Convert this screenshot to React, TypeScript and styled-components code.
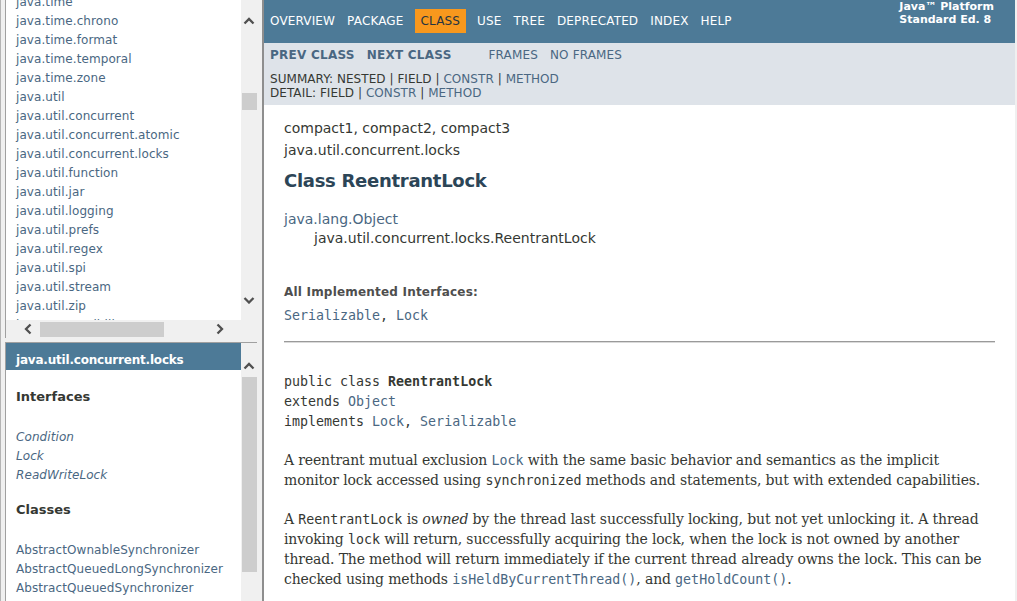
import React from "react";
import styled, { createGlobalStyle } from "styled-components";

const GlobalStyle = createGlobalStyle`
  html, body { margin: 0; padding: 0; }
  body {
    font-family: "DejaVu Sans", Arial, Helvetica, sans-serif;
    color: #353833;
    background: #f0f0f0;
  }
  #root { width: 1017px; height: 601px; }
`;

const LINK = "#4A6782";
const BLUE = "#4D7A97";
const MONO = `"DejaVu Sans Mono", monospace`;

const Screen = styled.div`
  display: flex;
  width: 1017px;
  height: 601px;
  overflow: hidden;
  background: #f0f0f0;
`;

/* ---------- left column (two frames) ---------- */
const LeftCol = styled.div`
  flex: none;
  width: 252px;
  border-left: 1px solid #b4b4b4;
  padding-left: 4px;
  padding-right: 5px;
  display: flex;
  flex-direction: column;
  gap: 4px;
`;

const TopFrame = styled.div`
  flex: none;
  height: 338px;
  display: grid;
  grid-template-columns: 235px 16px;
  grid-template-rows: 320px 18px;
  border-left: 1px solid #a0a0a0;
`;

const BottomFrame = styled.div`
  flex: 1;
  min-height: 0;
  display: grid;
  grid-template-columns: 235px 16px;
  border-left: 1px solid #a0a0a0;
  border-top: 1px solid #a0a0a0;
`;

const Pane = styled.div`
  background: #ffffff;
  overflow: hidden;
  min-height: 0;
`;

const Corner = styled.div`
  background: #f0f0f0;
`;

const IndexList = styled.ul<{ $offset?: number }>`
  list-style: none;
  margin: ${(p) => p.$offset ?? 0}px 0 0 0;
  padding: 0 0 0 10px;
  font-size: 12px;
  letter-spacing: 0.08px;
`;

const IndexItem = styled.li<{ $italic?: boolean }>`
  padding-top: 2px;
  line-height: 17px;
  white-space: nowrap;
  color: ${LINK};
  font-style: ${(p) => (p.$italic ? "italic" : "normal")};
`;

const PackageBar = styled.h1`
  margin: 0;
  background: ${BLUE};
  color: #ffffff;
  font-size: 12px;
  font-weight: bold;
  letter-spacing: -0.2px;
  line-height: 14px;
  padding: 10px 0 3px 10px;
  white-space: nowrap;
`;

const IndexHeading = styled.h2<{ $top: number }>`
  margin: ${(p) => p.$top}px 0 0 10px;
  font-size: 13px;
  line-height: 16px;
  font-weight: bold;
  color: #353833;
`;

/* ---------- fake scrollbars ---------- */
const VScroll = styled.div<{ $padTop: number; $padBottom: number }>`
  background: #f0f0f0;
  display: flex;
  flex-direction: column;
  padding-top: ${(p) => p.$padTop}px;
  padding-bottom: ${(p) => p.$padBottom}px;
  min-height: 0;
`;

const HScroll = styled.div`
  background: #f0f0f0;
  display: flex;
  align-items: flex-start;
  padding: 0 13px;
`;

const VBtn = styled.div`
  flex: none;
  height: 17px;
  display: flex;
  align-items: center;
  justify-content: center;
`;

const HBtn = styled.div`
  flex: none;
  width: 17px;
  height: 18px;
  display: flex;
  align-items: center;
  justify-content: center;
`;

const VThumb = styled.div<{ $top: number; $size: number }>`
  flex: none;
  margin-top: ${(p) => p.$top}px;
  margin-left: 1px;
  height: ${(p) => p.$size}px;
  background: #cdcdcd;
`;

const HThumb = styled.div<{ $left: number; $size: number }>`
  flex: none;
  margin-top: 2px;
  margin-left: ${(p) => p.$left}px;
  width: ${(p) => p.$size}px;
  height: 15px;
  background: #cdcdcd;
`;

const Spacer = styled.div`
  flex: 1;
`;

type Dir = "up" | "down" | "left" | "right";

const Chevron: React.FC<{ dir: Dir }> = ({ dir }) => {
  const vertical = dir === "up" || dir === "down";
  const paths: Record<Dir, string> = {
    up: "M1.5 6.5 L6 2 L10.5 6.5",
    down: "M1.5 2 L6 6.5 L10.5 2",
    left: "M6.5 1.5 L2 6 L6.5 10.5",
    right: "M1.5 1.5 L6 6 L1.5 10.5",
  };
  return (
    <svg
      width={vertical ? 12 : 8}
      height={vertical ? 8 : 12}
      viewBox={vertical ? "0 0 12 8" : "0 0 8 12"}
    >
      <path d={paths[dir]} fill="none" stroke="#505050" strokeWidth={2.3} />
    </svg>
  );
};

/* ---------- right frame ---------- */
const RightFrame = styled.div`
  flex: none;
  width: 751px;
  height: 601px;
  border-left: 2px solid #8e8e8e;
  background: #ffffff;
  overflow: hidden;
  display: flex;
  flex-direction: column;
`;

const TopNav = styled.div`
  flex: none;
  height: 43px;
  background: ${BLUE};
  color: #ffffff;
  font-size: 12px;
  display: flex;
  justify-content: space-between;
  align-items: flex-start;
`;

const NavList = styled.ul<{ $top?: number; $gapRight?: number }>`
  list-style: none;
  display: flex;
  margin: ${(p) => p.$top ?? 0}px ${(p) => p.$gapRight ?? 0}px 0 0;
  padding: 0;
`;

const NavItem = styled.li<{ $active?: boolean; $bold?: boolean }>`
  padding: 5px 6px;
  line-height: 14px;
  text-transform: uppercase;
  white-space: nowrap;
  letter-spacing: ${(p) => (p.$bold ? "0.25px" : "0.15px")};
  margin: ${(p) => (p.$active ? "0 5px" : "0")};
  background: ${(p) => (p.$active ? "#F8981D" : "transparent")};
  color: ${(p) => (p.$active ? "#253441" : "inherit")};
  font-weight: ${(p) => (p.$bold ? "bold" : "normal")};
`;

const About = styled.div`
  padding: 0 21px;
  font-size: 11px;
  line-height: 13px;
  font-weight: bold;
  white-space: nowrap;
`;

const SubNav = styled.div`
  flex: none;
  background: #dee3e9;
  font-size: 12px;
  padding-bottom: 5px;
  display: flex;
  flex-direction: column;
`;

const SubRow = styled.div`
  display: flex;
  color: ${LINK};
  margin-bottom: 5px;
`;

const SubLine = styled.div`
  padding-left: 6px;
  line-height: 14px;
  text-transform: uppercase;
  letter-spacing: 0.05px;
  color: #353833;
  white-space: nowrap;
`;

const SubLink = styled.span`
  color: ${LINK};
`;

const Content = styled.div`
  padding: 0 20px;
`;

const SubTitle = styled.div<{ $top: number }>`
  margin-top: ${(p) => p.$top}px;
  font-size: 14px;
  line-height: 17px;
`;

const Title = styled.h2`
  margin: 11px 0 0 0;
  font-size: 18px;
  line-height: 21px;
  font-weight: bold;
  letter-spacing: -0.28px;
  color: #2c4557;
`;

const Inheritance = styled.ul<{ $nested?: boolean }>`
  list-style: none;
  margin: ${(p) => (p.$nested ? "0" : "19px 0 0 0")};
  padding: 0 0 0 ${(p) => (p.$nested ? 30 : 0)}px;
  font-size: 14px;
  line-height: 19px;
`;

const Link = styled.span`
  color: ${LINK};
`;

const DefList = styled.dl`
  margin: 37px 0 0 0;
`;

const DefTerm = styled.dt`
  font-size: 12px;
  line-height: 15px;
  font-weight: bold;
  letter-spacing: 0.2px;
  color: #4e4e4e;
`;

const DefData = styled.dd`
  margin: 7px 0 0 0;
  font-family: ${MONO};
  font-size: 13.3px;
  line-height: 17px;
`;

const Rule = styled.hr`
  margin: 17px 0 0 0;
  height: 0;
  border: none;
  border-top: 1px solid #9a9a9a;
  border-bottom: 1px solid #dadada;
`;

const Signature = styled.pre`
  margin: 29px 0 0 0;
  font-family: ${MONO};
  font-size: 13.3px;
  line-height: 20px;
  color: #353833;
`;

const Strong = styled.span`
  font-weight: bold;
`;

const Block = styled.p<{ $top: number }>`
  margin: ${(p) => p.$top}px 0 0 0;
  font-family: "DejaVu Serif", Georgia, "Times New Roman", serif;
  font-size: 14px;
  letter-spacing: -0.15px;
  line-height: 20px;
  color: #353833;
`;

const Code = styled.code<{ $link?: boolean }>`
  font-family: ${MONO};
  font-size: 13.3px;
  line-height: 14px;
  letter-spacing: 0;
  color: ${(p) => (p.$link ? LINK : "inherit")};
`;

const packages = [
  "java.time",
  "java.time.chrono",
  "java.time.format",
  "java.time.temporal",
  "java.time.zone",
  "java.util",
  "java.util.concurrent",
  "java.util.concurrent.atomic",
  "java.util.concurrent.locks",
  "java.util.function",
  "java.util.jar",
  "java.util.logging",
  "java.util.prefs",
  "java.util.regex",
  "java.util.spi",
  "java.util.stream",
  "java.util.zip",
  "javax.accessibility",
  "javax.activation",
];

const interfaces = ["Condition", "Lock", "ReadWriteLock"];
const classes = [
  "AbstractOwnableSynchronizer",
  "AbstractQueuedLongSynchronizer",
  "AbstractQueuedSynchronizer",
  "LockSupport",
  "ReentrantLock",
];

const navItems = ["Overview", "Package", "Class", "Use", "Tree", "Deprecated", "Index", "Help"];

export default function App() {
  return (
    <>
      <GlobalStyle />
      <Screen>
        <LeftCol>
          <TopFrame>
            <Pane>
              <IndexList $offset={-8}>
                {packages.map((p) => (
                  <IndexItem key={p}>{p}</IndexItem>
                ))}
              </IndexList>
            </Pane>
            <VScroll $padTop={12} $padBottom={12}>
              <VBtn>
                <Chevron dir="up" />
              </VBtn>
              <VThumb $top={64} $size={17} />
              <Spacer />
              <VBtn>
                <Chevron dir="down" />
              </VBtn>
            </VScroll>
            <HScroll>
              <HBtn>
                <Chevron dir="left" />
              </HBtn>
              <HThumb $left={4} $size={124} />
              <Spacer />
              <HBtn>
                <Chevron dir="right" />
              </HBtn>
            </HScroll>
            <Corner />
          </TopFrame>
          <BottomFrame>
            <Pane>
              <PackageBar>java.util.concurrent.locks</PackageBar>
              <IndexHeading $top={19}>Interfaces</IndexHeading>
              <IndexList $offset={22}>
                {interfaces.map((n) => (
                  <IndexItem key={n} $italic>
                    {n}
                  </IndexItem>
                ))}
              </IndexList>
              <IndexHeading $top={18}>Classes</IndexHeading>
              <IndexList $offset={22}>
                {classes.map((n) => (
                  <IndexItem key={n}>{n}</IndexItem>
                ))}
              </IndexList>
            </Pane>
            <VScroll $padTop={14} $padBottom={0}>
              <VBtn>
                <Chevron dir="up" />
              </VBtn>
              <VThumb $top={3} $size={195} />
              <Spacer />
            </VScroll>
          </BottomFrame>
        </LeftCol>

        <RightFrame>
          <TopNav>
            <NavList $top={9}>
              {navItems.map((n) => (
                <NavItem key={n} $active={n === "Class"}>
                  {n}
                </NavItem>
              ))}
            </NavList>
            <About>
              Java™ Platform
              <br />
              Standard Ed. 8
            </About>
          </TopNav>
          <SubNav>
            <SubRow>
              <NavList $gapRight={25}>
                <NavItem $bold>Prev Class</NavItem>
                <NavItem $bold>Next Class</NavItem>
              </NavList>
              <NavList>
                <NavItem>Frames</NavItem>
                <NavItem>No Frames</NavItem>
              </NavList>
            </SubRow>
            <SubLine>
              Summary:&nbsp;Nested&nbsp;|&nbsp;Field&nbsp;|&nbsp;<SubLink>Constr</SubLink>&nbsp;|&nbsp;
              <SubLink>Method</SubLink>
            </SubLine>
            <SubLine>
              Detail:&nbsp;Field&nbsp;|&nbsp;<SubLink>Constr</SubLink>&nbsp;|&nbsp;<SubLink>Method</SubLink>
            </SubLine>
          </SubNav>
          <Content>
            <SubTitle $top={15}>compact1, compact2, compact3</SubTitle>
            <SubTitle $top={5}>java.util.concurrent.locks</SubTitle>
            <Title>Class ReentrantLock</Title>
            <Inheritance>
              <li>
                <Link>java.lang.Object</Link>
              </li>
              <li>
                <Inheritance $nested>
                  <li>java.util.concurrent.locks.ReentrantLock</li>
                </Inheritance>
              </li>
            </Inheritance>
            <DefList>
              <DefTerm>All Implemented Interfaces:</DefTerm>
              <DefData>
                <Link>Serializable</Link>, <Link>Lock</Link>
              </DefData>
            </DefList>
            <Rule />
            <Signature>
              public class <Strong>ReentrantLock</Strong>
              {"\n"}extends <Link>Object</Link>
              {"\n"}implements <Link>Lock</Link>, <Link>Serializable</Link>
            </Signature>
            <Block $top={18}>
              A reentrant mutual exclusion <Code $link>Lock</Code> with the same basic behavior and semantics as
              the implicit monitor lock accessed using <Code>synchronized</Code> methods and statements, but with
              extended capabilities.
            </Block>
            <Block $top={19}>
              A <Code>ReentrantLock</Code> is <em>owned</em> by the thread last successfully locking, but not yet
              unlocking it. A thread invoking <Code>lock</Code> will return, successfully acquiring the lock, when
              the lock is not owned by another thread. The method will return immediately if the current thread
              already owns the lock. This can be checked using methods <Code $link>isHeldByCurrentThread()</Code>,
              and <Code $link>getHoldCount()</Code>.
            </Block>
            <Block $top={19}>
              The constructor for this class accepts an optional <em>fairness</em> parameter. When set{" "}
              <Code>true</Code>, under contention, locks favor granting access to the longest-waiting thread.
            </Block>
          </Content>
        </RightFrame>
      </Screen>
    </>
  );
}
